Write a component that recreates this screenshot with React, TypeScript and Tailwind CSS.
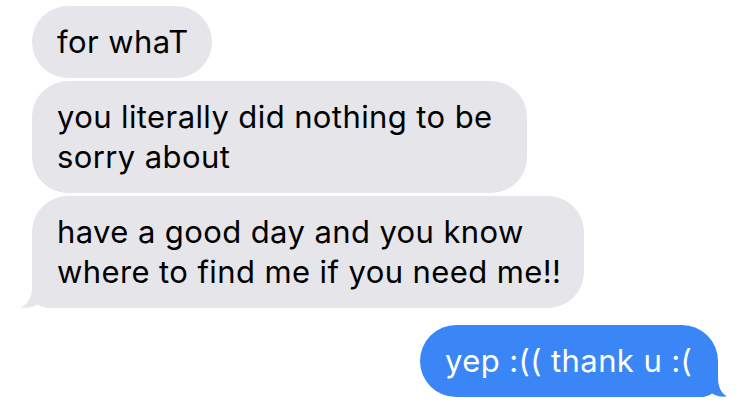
import type { ReactNode } from 'react';

const font = "font-['Inter','Noto_Sans',sans-serif]";

function GrayBubble({ children, width, tail = false }: { children: ReactNode; width: string; tail?: boolean }) {
  return (
    <div
      className={`relative ${width} bg-[#e5e5ea] text-black rounded-[36px] ${tail ? 'rounded-bl-[18px]' : ''} px-[25px] py-[16px] text-[31px] tracking-[0.4px] leading-[40px] whitespace-nowrap`}
    >
      {tail && (
        <svg className="absolute left-[-11px] bottom-0" width="30" height="30" viewBox="0 0 30 30">
          <path
            d="M11 0 L30 0 L30 30 C24 30 20 28.5 17 26.5 C13 29 7 30 0 29.5 C6 26 11 20 11 10 Z"
            fill="#e5e5ea"
          />
        </svg>
      )}
      <span className="relative">{children}</span>
    </div>
  );
}

export default function App() {
  return (
    <div className={`w-[750px] h-[404px] bg-white overflow-hidden pt-[6px] pl-[32px] pr-[32px] flex flex-col ${font}`}>
      <div className="flex flex-col gap-[3px]">
        <GrayBubble width="w-[180px]">for whaT</GrayBubble>
        <GrayBubble width="w-[495px]">
          you literally did nothing to be
          <br />
          sorry about
        </GrayBubble>
        <GrayBubble width="w-[552px]" tail>
          have a good day and you know
          <br />
          where to find me if you need me!!
        </GrayBubble>
      </div>

      <div className="self-end mt-[17px] relative w-[298px] bg-[#3a86f7] text-white rounded-[36px] rounded-br-[18px] px-[25px] py-[16px] text-[31px] tracking-[0.4px] leading-[40px] whitespace-nowrap">
        <svg className="absolute right-[-9px] bottom-0" width="28" height="30" viewBox="0 0 28 30">
          <path
            d="M19 0 L0 0 L0 30 C6 30 10 28.5 13 26.5 C18 29.5 23 30 28 29.5 C22 26 19 20 19 10 Z"
            fill="#3a86f7"
          />
        </svg>
        <span className="relative">yep :(( thank u :(</span>
      </div>
    </div>
  );
}
